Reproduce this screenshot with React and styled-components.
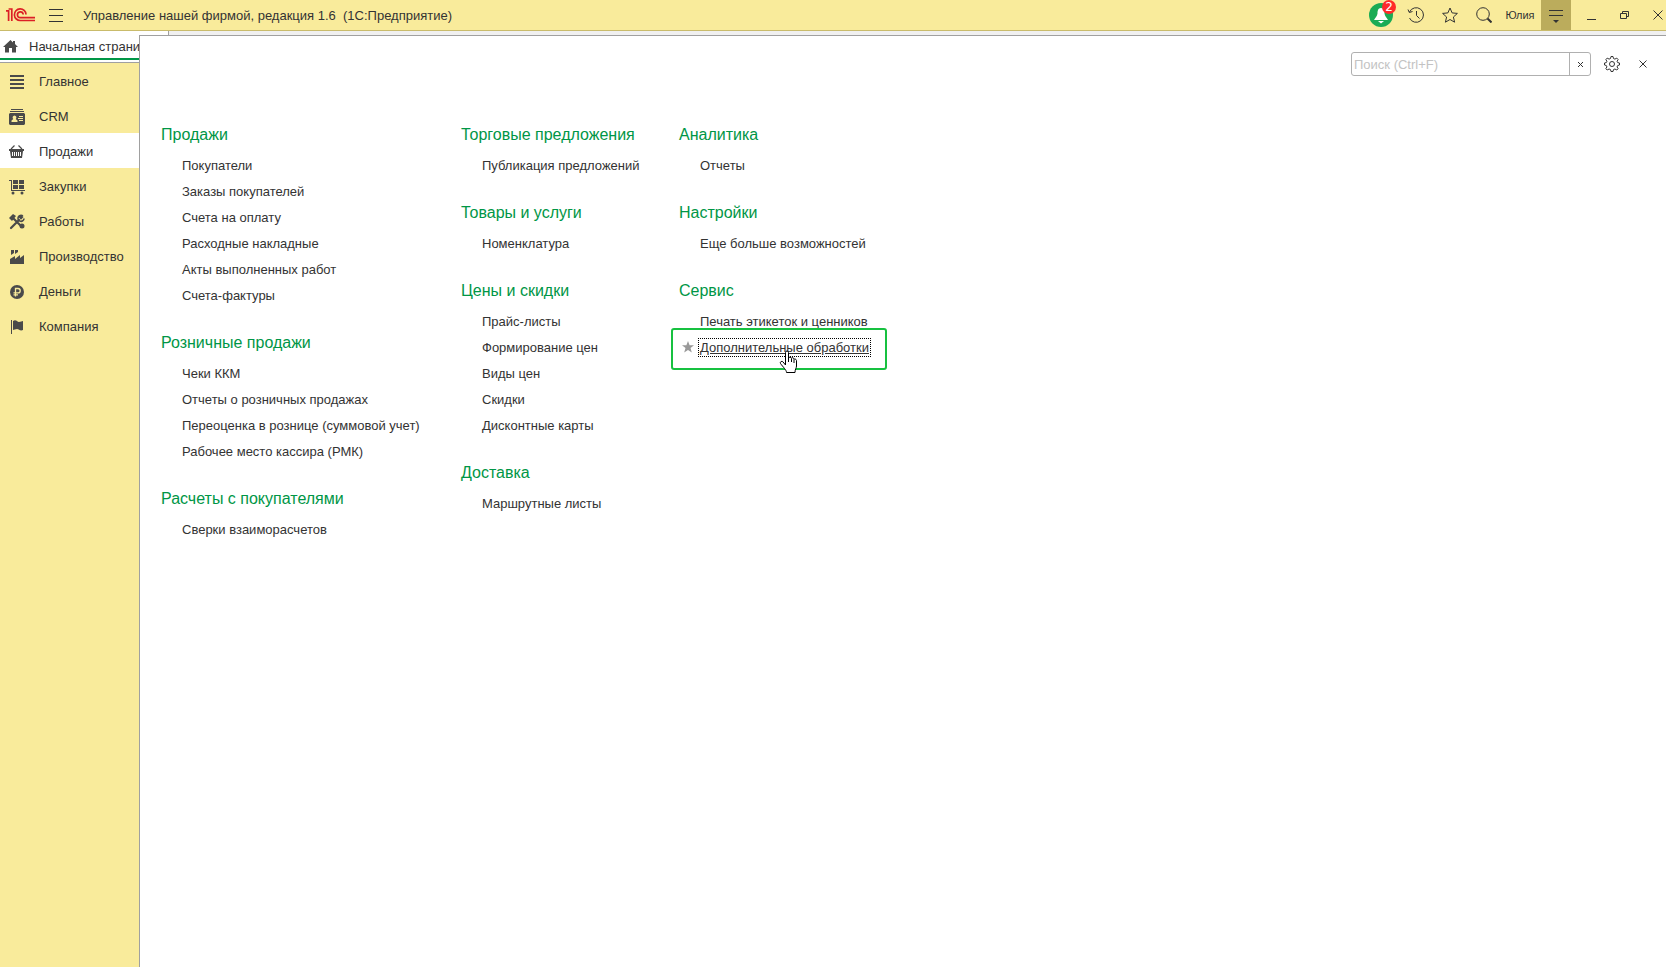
import React from "react";
import styled, { createGlobalStyle } from "styled-components";

const GlobalStyle = createGlobalStyle`
  * {
    box-sizing: border-box;
  }

  body {
    margin: 0;
    font-family: "Liberation Sans", Arial, sans-serif;
    font-size: 13px;
    color: #333;
    background: #fff;
  }

  button {
    padding: 0;
    border: none;
    background: transparent;
    font: inherit;
    color: inherit;
    cursor: pointer;
  }
`;

const Page = styled.div`
  display: flex;
  flex-direction: column;
  min-height: 100vh;
`;

/* Title bar */
const TitleBar = styled.header`
  display: flex;
  align-items: center;
  height: 31px;
  padding-left: 6px;
  background: #f9eb9b;
  border-bottom: 1px solid #c9bb6b;
`;

const IconButton = styled.button`
  display: flex;
  align-items: center;
  justify-content: ${(props) => (props.$end ? "flex-end" : "center")};
  width: ${(props) => props.$width || 34}px;
  height: 30px;
  padding-right: ${(props) => (props.$end ? "3px" : "0")};
  background: ${(props) => (props.$active ? "#bbac5c" : "transparent")};
`;

const WindowTitle = styled.h1`
  flex: 1;
  margin: 0 0 0 6px;
  font-size: 13px;
  font-weight: normal;
  white-space: pre;
`;

const Bell = styled.button`
  position: relative;
  display: flex;
  width: 24px;
  height: 24px;
  margin-right: 6px;
`;

const Badge = styled.span`
  position: absolute;
  top: -3px;
  right: -3px;
  width: 14px;
  height: 14px;
  border-radius: 50%;
  background: #ff2a2a;
  color: #fff;
  font-family: "DejaVu Sans", sans-serif;
  font-size: 12px;
  line-height: 14px;
  text-align: center;
`;

const UserName = styled.button`
  width: 38px;
  height: 30px;
  font-size: 11px;
  margin-right: 2px;
`;

/* Body */
const Body = styled.div`
  flex: 1;
  display: grid;
  grid-template-columns: 139px 1fr;
  grid-template-rows: 4px 28px 1fr;
  background: #f0f0f0;
`;

const HomeTab = styled.button`
  grid-row: 1 / 3;
  grid-column: 1;
  display: flex;
  align-items: center;
  justify-content: flex-start;
  gap: 11px;
  padding-left: 3px;
  overflow: hidden;
  white-space: nowrap;
  background: #fff;
  border-bottom: 1px solid #a0a0a0;
  box-shadow: inset 0 -2px #fff, inset 0 -4px #009646;

  svg {
    flex: none;
  }
`;

const TabRest = styled.div`
  width: 30px;
  background: #fff;
  border-right: 1px solid #a0a0a0;
`;

const Sidebar = styled.nav`
  grid-row: 3;
  grid-column: 1;
  background: #f9eb9b;
`;

const SidebarItem = styled.button`
  display: flex;
  align-items: center;
  gap: 14px;
  width: 100%;
  height: 35px;
  padding: 2px 0 0 9px;
  text-align: left;
  background: ${(props) => (props.$active ? "#fff" : "transparent")};

  svg {
    flex: none;
  }
`;

const Panel = styled.main`
  grid-row: 2 / 4;
  grid-column: 2;
  background: #fff;
  border-top: 1px solid #a0a0a0;
  border-left: 1px solid #a0a0a0;
`;

const PanelTools = styled.div`
  display: flex;
  align-items: center;
  justify-content: flex-end;
  height: 56px;
  padding-right: 9px;
`;

const SearchBox = styled.div`
  display: flex;
  width: 240px;
  height: 24px;
  margin-right: 4px;
  border: 1px solid #b0b0b0;
  border-radius: 3px;
`;

const SearchInput = styled.input`
  flex: 1;
  min-width: 0;
  padding: 0 2px;
  border: none;
  outline: none;
  background: transparent;
  font: inherit;

  &::placeholder {
    color: #c3c3c3;
  }
`;

const ClearButton = styled.button`
  display: flex;
  align-items: center;
  justify-content: center;
  width: 21px;
  border-left: 1px solid #b0b0b0;
`;

const Columns = styled.div`
  display: grid;
  grid-template-columns: 300px 218px auto;
  justify-content: start;
  padding: 25px 21px;
`;

const Group = styled.section`
  margin-bottom: 16px;
`;

const GroupTitle = styled.h2`
  margin: 0;
  font-size: 16px;
  font-weight: normal;
  line-height: 36px;
  color: #009646;
`;

const LinkList = styled.ul`
  margin: 0;
  padding: 0 0 0 21px;
  list-style: none;
`;

const LinkRow = styled.li`
  position: relative;
  height: 26px;
  line-height: 26px;
`;

const CommandLink = styled.a`
  color: #333;
  text-decoration: ${(props) => (props.$focused ? "underline" : "none")};
  outline: ${(props) => (props.$focused ? "1px dotted #000" : "none")};
  outline-offset: 1px;
  white-space: nowrap;
`;

/* Frame with the favourites star around the focused command */
const FocusFrame = styled.span`
  position: absolute;
  top: -7px;
  left: -29px;
  right: -18px;
  height: 42px;
  border: 2px solid #17c140;
  border-radius: 3px;
  pointer-events: none;
`;

const StarMark = styled.svg`
  position: absolute;
  top: 6px;
  left: -18px;
`;

const HandCursor = styled.svg`
  position: absolute;
  top: 15px;
  left: 79px;
`;

const sections = [
  { name: "Главное", icon: "menu" },
  { name: "CRM", icon: "crm" },
  { name: "Продажи", icon: "basket", active: true },
  { name: "Закупки", icon: "cart" },
  { name: "Работы", icon: "tools" },
  { name: "Производство", icon: "factory" },
  { name: "Деньги", icon: "ruble" },
  { name: "Компания", icon: "flag" },
];

const columns = [
  [
    {
      title: "Продажи",
      links: [
        "Покупатели",
        "Заказы покупателей",
        "Счета на оплату",
        "Расходные накладные",
        "Акты выполненных работ",
        "Счета-фактуры",
      ],
    },
    {
      title: "Розничные продажи",
      links: [
        "Чеки ККМ",
        "Отчеты о розничных продажах",
        "Переоценка в рознице (суммовой учет)",
        "Рабочее место кассира (РМК)",
      ],
    },
    { title: "Расчеты с покупателями", links: ["Сверки взаиморасчетов"] },
  ],
  [
    { title: "Торговые предложения", links: ["Публикация предложений"] },
    { title: "Товары и услуги", links: ["Номенклатура"] },
    {
      title: "Цены и скидки",
      links: [
        "Прайс-листы",
        "Формирование цен",
        "Виды цен",
        "Скидки",
        "Дисконтные карты",
      ],
    },
    { title: "Доставка", links: ["Маршрутные листы"] },
  ],
  [
    { title: "Аналитика", links: ["Отчеты"] },
    { title: "Настройки", links: ["Еще больше возможностей"] },
    {
      title: "Сервис",
      links: ["Печать этикеток и ценников", "Дополнительные обработки"],
    },
  ],
];

const focusedLink = "Дополнительные обработки";

const glyphs = {
  menu: <path d="M1 1h14v2H1zM1 5h14v2H1zM1 9h14v2H1zM1 13h14v2H1z" />,
  crm: (
    <>
      <path d="M2 0h12v1H2zM1 2h14v1H1z" />
      <path
        fillRule="evenodd"
        d="M1 4h14l1 1v10l-1 1H1l-1-1V5zM5.500 6.500a2 2 0 0 0-1.200 3.500L2.500 11.500V13h6v-1.500L6.700 10a2 2 0 0 0-1.200-3.500zM10 7v1h4V7zM9 9v1h5V9zM10 11v1h4v-1z"
      />
    </>
  ),
  basket: (
    <>
      <path d="M2 5l3.500-3.500M13 5L9.500 1.500" stroke="#4a4a4a" strokeWidth="1.200" />
      <path
        fillRule="evenodd"
        d="M0 5h15v2h-1l-1 7H2L1 7H0zM3 8v4h1V8zM5 8v4h1V8zM7 8v4h1V8zM9 8v4h1V8zM11 8v4h1V8z"
      />
    </>
  ),
  cart: (
    <>
      <path d="M0 1h3v10h13v1H2V2H0zM4 1h5v4H4zM10 1h5v4h-5zM4 6h5v4H4zM10 6h5v4h-5z" />
      <circle cx="4" cy="14" r="1.500" />
      <circle cx="13" cy="14" r="1.500" />
    </>
  ),
  tools: (
    <>
      <path
        d="M2 14L10 6M3 3l10 10"
        stroke="#4a4a4a"
        strokeWidth="2.200"
        strokeLinecap="round"
      />
      <path d="M0 4l4-4 3 2-4 5z" />
      <path
        d="M14 2.500l-2 2-1-1 2-2a3 3 0 1 0 2 3"
        fill="none"
        stroke="#4a4a4a"
        strokeWidth="1.600"
      />
      <circle cx="13" cy="12" r="2.500" />
    </>
  ),
  factory: <path d="M1 15v-5l5-3v3l5-4v3l4-3v9zM2 1h3v3L2 6zM6 1h3v2L6 5z" />,
  ruble: (
    <>
      <circle cx="8" cy="8" r="7" />
      <path
        d="M6.500 12.500V4.500H9a2.200 2.200 0 0 1 0 4.400H4.500M4.500 10.800H9"
        fill="none"
        stroke="#f9eb9b"
        strokeWidth="1.300"
      />
    </>
  ),
  flag: (
    <path d="M2 1h1v14H2zM4 2c3-2 4 1 6 1 1.500 0 3-1 4-1v9c-3 1.500-4-1-6-1-1.500 0-3 1-4 1z" />
  ),
};

const Glyph = ({ name }) => (
  <svg width="16" height="16" viewBox="0 0 16 16" fill="#4a4a4a">
    {glyphs[name]}
  </svg>
);

const Line = ({ size = 16, box = 16, color = "#333", width = 1, children }) => (
  <svg
    width={size}
    height={size}
    viewBox={`0 0 ${box} ${box}`}
    fill="none"
    stroke={color}
    strokeWidth={width}
  >
    {children}
  </svg>
);

const Logo = () => (
  <svg width="29" height="16" viewBox="0 0 29 16" fill="none" stroke="#dc1f26">
    <path d="M0 3.800h2.600V14M2.600 2h3.200V14" strokeWidth="1.700" />
    <path d="M20 7.500A5.800 5.800 0 1 0 14.500 13.500H29" strokeWidth="1.700" />
    <path d="M17.200 7.500A2.900 2.900 0 1 0 14.500 10.700H29" strokeWidth="1.700" />
  </svg>
);

const LinkGroup = ({ title, links }) => (
  <Group>
    <GroupTitle>{title}</GroupTitle>
    <LinkList>
      {links.map((link) => {
        const focused = link === focusedLink;
        return (
          <LinkRow key={link}>
            <CommandLink href="#" $focused={focused}>
              {link}
            </CommandLink>
            {focused && (
              <>
                <FocusFrame />
                <StarMark width="12" height="12" viewBox="0 0 12 12" fill="#999">
                  <path d="M6 0l1.600 4.200H12L8.500 7l1.300 4.500L6 8.900l-3.800 2.600L3.500 7 0 4.200h4.400z" />
                </StarMark>
                <HandCursor
                  width="20"
                  height="24"
                  viewBox="0 0 20 24"
                  fill="#fff"
                  stroke="#000"
                >
                  <path d="M6.500 15V2.500q0-1.500 1.500-1.500t1.500 1.500V8q0-1 1.500-.8t1.500 1.300q.200-1 1.300-.8T15 9.500q.200-.800 1.200-.5t1.300 1.500V16c0 2-1.500 3-1.500 6.500H7.500C7.500 20 4 17 1.500 13.500q-.600-1.500.600-2t2 .5z" />
                  <path d="M9.500 8v4M12.500 9v3M15 10v3" />
                </HandCursor>
              </>
            )}
          </LinkRow>
        );
      })}
    </LinkList>
  </Group>
);

const App = () => (
  <Page>
    <GlobalStyle />
    <TitleBar>
      <Logo />
      <IconButton $width={42} aria-label="Меню">
        <Line>
          <path d="M1 2.500h14M1 8.500h14M1 14.500h14" />
        </Line>
      </IconButton>
      <WindowTitle>
        {"Управление нашей фирмой, редакция 1.6  (1С:Предприятие)"}
      </WindowTitle>
      <Bell aria-label="Уведомления">
        <svg width="24" height="24" viewBox="0 0 24 24">
          <circle cx="12" cy="12" r="12" fill="#1aab55" />
          <path
            fill="#fff"
            d="M12 5c-3 0-3.500 3-3.500 5.500-.300 2.500-2 4-3.500 6.500h14c-1.500-2.500-3.200-4-3.500-6.500 0-2.500-.500-5.500-3.500-5.500zM9 18h6l-3 2.500z"
          />
        </svg>
        <Badge>2</Badge>
      </Bell>
      <IconButton aria-label="История">
        <Line size={18} box={18}>
          <path d="M2.500 6A7.300 7.300 0 1 1 2.500 12M1 3.500L2.300 6.500 5.500 5.500M9.500 5v4.500l3 3" />
        </Line>
      </IconButton>
      <IconButton aria-label="Избранное">
        <Line>
          <path d="M8 1l2.100 4.900 5.300.5-4 3.600 1.200 5.200L8 12.500l-4.600 2.700L4.600 10l-4-3.600 5.300-.5z" />
        </Line>
      </IconButton>
      <IconButton aria-label="Поиск">
        <Line>
          <circle cx="7" cy="7" r="6.300" />
          <path d="M11.500 11.500l4 4" strokeWidth="2" />
        </Line>
      </IconButton>
      <UserName>Юлия</UserName>
      <IconButton $width={30} $active aria-label="Сервис и настройки">
        <Line>
          <path d="M1 3.500h14M1 8.500h14" />
          <path d="M5 13h6l-3 3z" fill="#333" stroke="none" />
        </Line>
      </IconButton>
      <IconButton $width={40} aria-label="Свернуть">
        <Line size={10} box={10}>
          <path d="M1 9.500h9" />
        </Line>
      </IconButton>
      <IconButton $width={27} aria-label="Восстановить">
        <Line size={10} box={10}>
          <path d="M.5 3.500h6v5h-6zM2.500 3.500v-2h6v5h-2" />
        </Line>
      </IconButton>
      <IconButton $width={28} $end aria-label="Закрыть">
        <Line size={10} box={10}>
          <path d="M.5.5l9 9M9.500.5l-9 9" />
        </Line>
      </IconButton>
    </TitleBar>
    <Body>
      <HomeTab>
        <svg width="15" height="13" viewBox="0 0 15 13" fill="#4a4a4a">
          <path d="M7.500 0L0 7h2v5.500h4V8h3v4.500h4V7h2L12 4V1h-2v1.500z" />
        </svg>
        Начальная страница
      </HomeTab>
      <TabRest />
      <Sidebar>
        {sections.map(({ name, icon, active }) => (
          <SidebarItem key={name} $active={active}>
            <Glyph name={icon} />
            {name}
          </SidebarItem>
        ))}
      </Sidebar>
      <Panel>
        <PanelTools>
          <SearchBox>
            <SearchInput type="text" placeholder="Поиск (Ctrl+F)" aria-label="Поиск" />
            <ClearButton aria-label="Очистить">
              <Line size={7} box={7}>
                <path d="M1 1l5 5M6 1L1 6" />
              </Line>
            </ClearButton>
          </SearchBox>
          <IconButton aria-label="Настройка">
            <Line>
              <path d="M6.500 2.500L7 .5h2l.5 2 1.400.6 1.900-1 1.300 1.400-1 1.800.600 1.300 1.800.4v2l-1.800.5-.600 1.400 1 1.800-1.300 1.300-1.900-1-1.400.600-.500 1.900H7l-.500-1.900-1.400-.600-1.900 1-1.300-1.300 1-1.800-.600-1.400L.500 9V7l1.800-.400.600-1.300-1-1.800 1.300-1.400 1.900 1z" />
              <circle cx="8" cy="8" r="2.500" />
            </Line>
          </IconButton>
          <IconButton $width={28} aria-label="Закрыть панель">
            <Line size={8} box={8}>
              <path d="M.5.5l7 7M7.500.5l-7 7" />
            </Line>
          </IconButton>
        </PanelTools>
        <Columns>
          {columns.map((groups, index) => (
            <div key={index}>
              {groups.map((group) => (
                <LinkGroup key={group.title} {...group} />
              ))}
            </div>
          ))}
        </Columns>
      </Panel>
    </Body>
  </Page>
);

export default App;
